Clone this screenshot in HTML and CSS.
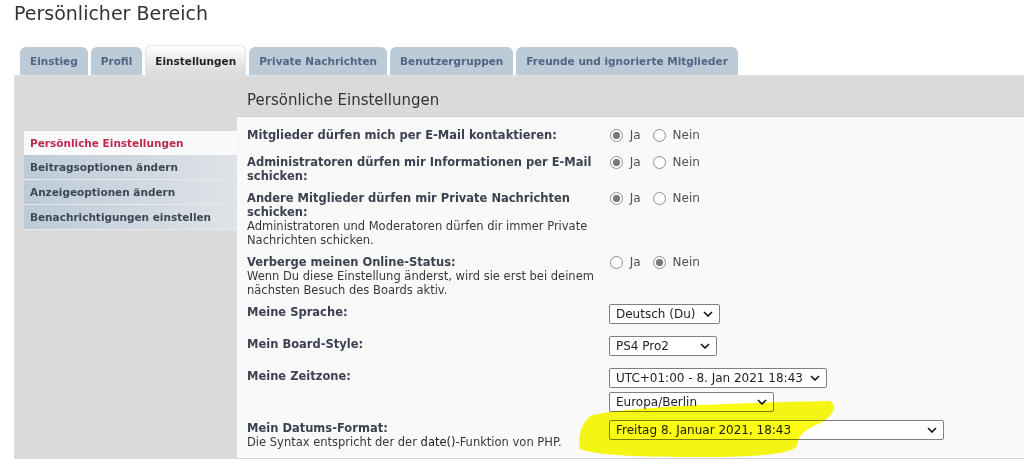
FILE: index.html
```html
<!DOCTYPE html>
<html lang="de">
<head>
<meta charset="utf-8">
<title>Persönlicher Bereich</title>
<link rel="stylesheet" href="styles.css">
</head>
<body>
<div class="page">
  <h1 class="page-title">Persönlicher Bereich</h1>
  <ul class="tabs">
    <li class="tab">Einstieg</li>
    <li class="tab">Profil</li>
    <li class="tab tab-active">Einstellungen</li>
    <li class="tab">Private Nachrichten</li>
    <li class="tab">Benutzergruppen</li>
    <li class="tab">Freunde und ignorierte Mitglieder</li>
  </ul>
  <div class="panel">
    <nav class="side">
      <ul class="menu">
        <li class="menu-item menu-active">Persönliche Einstellungen</li>
        <li class="menu-item">Beitragsoptionen ändern</li>
        <li class="menu-item">Anzeigeoptionen ändern</li>
        <li class="menu-item">Benachrichtigungen einstellen</li>
      </ul>
    </nav>
    <main class="main">
      <h2 class="main-title">Persönliche Einstellungen</h2>
      <div class="content">
        <dl class="row">
          <dt class="label"><b>Mitglieder dürfen mich per E-Mail kontaktieren:</b></dt>
          <dd class="field">
            <label class="opt"><input type="radio" name="r1" checked> Ja</label>
            <label class="opt"><input type="radio" name="r1"> Nein</label>
          </dd>
        </dl>
        <dl class="row">
          <dt class="label"><b>Administratoren dürfen mir Informationen per E-Mail schicken:</b></dt>
          <dd class="field">
            <label class="opt"><input type="radio" name="r2" checked> Ja</label>
            <label class="opt"><input type="radio" name="r2"> Nein</label>
          </dd>
        </dl>
        <dl class="row">
          <dt class="label"><b>Andere Mitglieder dürfen mir Private Nachrichten schicken:</b><br><span class="desc">Administratoren und Moderatoren dürfen dir immer Private Nachrichten schicken.</span></dt>
          <dd class="field">
            <label class="opt"><input type="radio" name="r3" checked> Ja</label>
            <label class="opt"><input type="radio" name="r3"> Nein</label>
          </dd>
        </dl>
        <dl class="row">
          <dt class="label"><b>Verberge meinen Online-Status:</b><br><span class="desc">Wenn Du diese Einstellung änderst, wird sie erst bei deinem nächsten Besuch des Boards aktiv.</span></dt>
          <dd class="field">
            <label class="opt"><input type="radio" name="r4"> Ja</label>
            <label class="opt"><input type="radio" name="r4" checked> Nein</label>
          </dd>
        </dl>
        <dl class="row">
          <dt class="label"><b>Meine Sprache:</b></dt>
          <dd class="field selects">
            <span class="sel w-lang"><select><option>Deutsch (Du)</option></select><svg class="chev" viewBox="0 0 10 6"><path d="M1 1l4 4 4-4" /></svg></span>
          </dd>
        </dl>
        <dl class="row">
          <dt class="label"><b>Mein Board-Style:</b></dt>
          <dd class="field selects">
            <span class="sel w-style"><select><option>PS4 Pro2</option></select><svg class="chev" viewBox="0 0 10 6"><path d="M1 1l4 4 4-4" /></svg></span>
          </dd>
        </dl>
        <dl class="row row-tz">
          <dt class="label"><b>Meine Zeitzone:</b></dt>
          <dd class="field selects">
            <span class="sel w-tz"><select><option>UTC+01:00 - 8. Jan 2021 18:43</option></select><svg class="chev" viewBox="0 0 10 6"><path d="M1 1l4 4 4-4" /></svg></span>
            <span class="sel w-city"><select><option>Europa/Berlin</option></select><svg class="chev" viewBox="0 0 10 6"><path d="M1 1l4 4 4-4" /></svg></span>
          </dd>
        </dl>
        <dl class="row">
          <dt class="label"><b>Mein Datums-Format:</b><br><span class="desc">Die Syntax entspricht der der <code class="code">date()</code>-Funktion von PHP.</span></dt>
          <dd class="field selects">
            <span class="sel w-date"><select><option>Freitag 8. Januar 2021, 18:43</option></select><svg class="chev" viewBox="0 0 10 6"><path d="M1 1l4 4 4-4" /></svg></span>
          </dd>
        </dl>
      </div>
    </main>
  </div>
  <svg class="marker" viewBox="0 0 260 62" width="260" height="62">
    <path d="M2 51 C 0 40, 2 28, 12 18 C 40 10, 120 6, 250 3 C 259 3, 259 18, 240 26 C 226 32, 220 38, 219 48 C 214 56, 180 59, 122 59 C 70 59, 20 58, 2 51 Z"/>
  </svg>
</div>
</body>
</html>
```

FILE: styles.css
```css
* { box-sizing: border-box; }
html, body { margin: 0; padding: 0; }
body {
  background: #ffffff;
  font-family: "DejaVu Sans", Verdana, sans-serif;
  font-size: 10.5px;
  color: #333333;
  overflow: hidden;
}
.page {
  position: relative;
  padding-left: 14px;
  height: 459px;
}
.page-title {
  margin: 0;
  padding-top: 1px;
  font-size: 19px;
  line-height: 24px;
  font-weight: normal;
  color: #333333;
}
.tabs {
  list-style: none;
  margin: 20px 0 0 0;
  padding: 0 0 0 6px;
  display: flex;
  align-items: flex-end;
  gap: 3px;
  height: 30px;
}
.tab {
  height: 28px;
  padding: 7px 10px 0 10px;
  line-height: 14px;
  font-weight: bold;
  color: #536482;
  background: #bccbd8;
  border-radius: 6px 6px 0 0;
  white-space: nowrap;
}
.tab-active {
  height: 30px;
  padding: 8px 9px 0 9px;
  color: #222222;
  background: linear-gradient(#ffffff, #e6e6e6 60%, #dadada);
  border: 1px solid #e3e3e3;
  border-bottom: none;
}
.panel {
  display: flex;
  background: #dadada;
  height: 384px;
  border-top: 1px solid #e2e2e2;
}
.side {
  width: 223px;
  padding: 55px 0 0 10px;
  flex: none;
}
.menu {
  list-style: none;
  margin: 0;
  padding: 0;
}
.menu-item {
  height: 25px;
  line-height: 24px;
  padding-left: 6px;
  font-weight: bold;
  color: #3d4654;
  background: linear-gradient(to right, #bdcbd7, #dfe3e7);
  border-bottom: 1px solid #e6eaee;
  white-space: nowrap;
}
.menu-active {
  height: 24px;
  color: #bc2a4d;
  background: #fafafa;
  border-bottom: none;
}
.main {
  flex: 1;
  display: flex;
  flex-direction: column;
}
.main-title {
  margin: 0;
  height: 41px;
  padding: 14px 0 0 10px;
  font-size: 15px;
  line-height: 20px;
  font-weight: normal;
  color: #333333;
  border-bottom: 1px solid #d0d0d0;
}
.content {
  flex: 1;
  background: #f9f9f9;
  padding: 11px 10px 0 10px;
  border-bottom: 1px solid #d2d2d2;
  font-size: 11.5px;
}
.row {
  display: flex;
  margin: 0;
  padding-bottom: 8px;
}
.label {
  width: 362px;
  padding-right: 4px;
  flex: none;
  line-height: 14px;
  color: #3a4250;
}
.label b { font-weight: bold; }
.desc { color: #383838; }
.code {
  font-family: "DejaVu Sans", Verdana, sans-serif;
  font-size: 11.5px;
  color: #222222;
}
.field {
  margin: 0;
  display: flex;
  align-items: flex-start;
  min-height: 19px;
}
.opt {
  display: inline-flex;
  align-items: center;
  height: 14px;
  font-size: 12px;
  color: #505050;
  margin-right: 11px;
  white-space: pre;
}
.opt input {
  appearance: none;
  -webkit-appearance: none;
  width: 13px;
  height: 13px;
  margin: 0 3px 0 1px;
  border: 1px solid #8f8f8f;
  border-radius: 50%;
  background: #ffffff;
}
.opt input:checked {
  background: radial-gradient(circle, #7a7a7a 0 3.4px, #ffffff 3.9px);
}
.selects {
  flex-direction: column;
  gap: 4px;
  padding-bottom: 5px;
  margin-top: -1px;
}
.row-tz { padding-bottom: 4px; }
.sel {
  display: block;
  position: relative;
  height: 20px;
}
.sel select {
  appearance: none;
  -webkit-appearance: none;
  display: block;
  width: 100%;
  height: 20px;
  margin: 0;
  padding: 0 0 0 6px;
  font-family: "DejaVu Sans", Verdana, sans-serif;
  font-size: 12px;
  color: #222222;
  background: #ffffff;
  border: 1px solid #808080;
  border-radius: 2px;
}
.chev {
  position: absolute;
  right: 7px;
  top: 7px;
  width: 10px;
  height: 6px;
  pointer-events: none;
}
.chev path {
  fill: none;
  stroke: #111111;
  stroke-width: 1.6;
}
.w-lang { width: 111px; }
.w-style { width: 108px; }
.w-tz { width: 218px; }
.w-city { width: 165px; }
.w-date { width: 335px; }
.marker {
  position: absolute;
  left: 578px;
  top: 398px;
  pointer-events: none;
  mix-blend-mode: multiply;
}
.marker path { fill: #fbfb14; }
```
